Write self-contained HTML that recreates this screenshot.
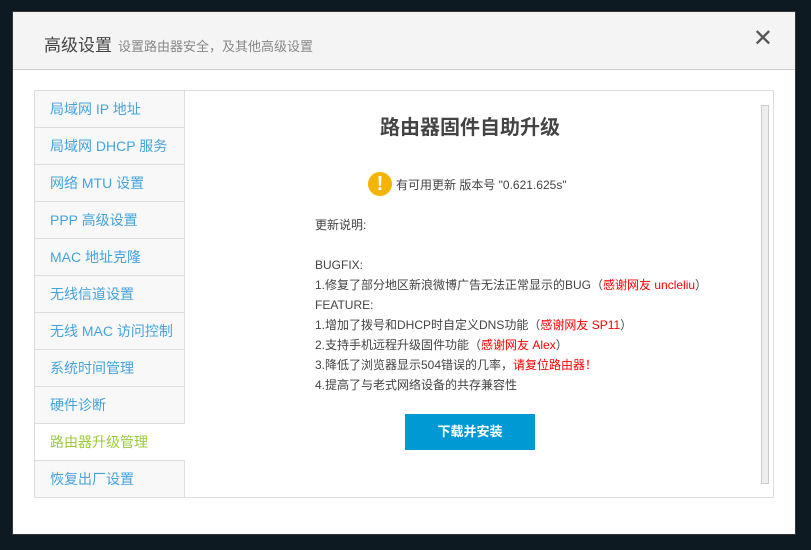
<!DOCTYPE html>
<html><head><meta charset="utf-8"><style>
*{margin:0;padding:0;box-sizing:border-box}
body{width:811px;height:550px;background:#0d1a22;font-family:"Liberation Sans","Noto Sans CJK SC",sans-serif;position:relative;overflow:hidden}
.modal{position:absolute;left:12px;top:11px;width:784px;height:524px;background:#fff;border:1px solid #333}
.hd{height:58px;background:#f4f4f4;border-bottom:1px solid #ccc;position:relative}
.hd .t{position:absolute;left:31px;top:19px;font-size:17px;color:#444}
.hd .s{font-size:13px;color:#888;margin-left:6px}
.hd .x{position:absolute;right:22px;top:12px;font-size:24px;color:#555}
.panel{position:absolute;left:21px;top:78px;width:740px;height:408px;border:1px solid #ddd}
.side{position:absolute;left:0;top:0;width:150px}
.side div{height:37px;border-bottom:1px solid #ddd;border-right:1px solid #ddd;background:#f8f8f8;color:#45a3dc;font-size:14px;line-height:36px;padding-left:15px}
.side div.on{background:#fff;color:#9ccb3a;border-right:none}
.content{position:absolute;left:150px;top:0;right:0;bottom:0}
.sb{position:absolute;left:576px;top:14px;width:8px;height:379px;border:1px solid #ccc;background:#eee}
h1{position:absolute;left:0;width:570px;top:20px;text-align:center;font-size:20px;color:#444;font-weight:bold}
.up{position:absolute;left:183px;top:81px;font-size:12px;color:#444;display:flex;align-items:center}
.ic{width:24px;height:24px;border-radius:50%;background:#f5b400;color:#fff;font-weight:bold;font-size:20px;text-align:center;line-height:24px;margin-right:4px}
.notes{position:absolute;left:130px;top:124px;font-size:12px;color:#444;line-height:20px}
.r{color:#f00}
.btn{position:absolute;left:220px;top:323px;width:130px;height:36px;background:#0099d3;color:#fff;font-weight:bold;font-size:13px;text-align:center;line-height:36px}
</style></head><body>
<div class="modal">
<div class="hd"><div class="t">高级设置<span class="s">设置路由器安全，及其他高级设置</span></div><div class="x">✕</div></div>
<div class="panel">
<div class="side">
<div>局域网 IP 地址</div><div>局域网 DHCP 服务</div><div>网络 MTU 设置</div><div>PPP 高级设置</div><div>MAC 地址克隆</div><div>无线信道设置</div><div>无线 MAC 访问控制</div><div>系统时间管理</div><div>硬件诊断</div><div class="on">路由器升级管理</div><div>恢复出厂设置</div>
</div>
<div class="content">
<h1>路由器固件自助升级</h1>
<div class="up"><div class="ic">!</div>有可用更新 版本号 "0.621.625s"</div>
<div class="notes">更新说明:<br><br>BUGFIX:<br>1.修复了部分地区新浪微博广告无法正常显示的BUG（<span class="r">感谢网友 uncleliu</span>）<br>FEATURE:<br>1.增加了拨号和DHCP时自定义DNS功能（<span class="r">感谢网友 SP11</span>）<br>2.支持手机远程升级固件功能（<span class="r">感谢网友 Alex</span>）<br>3.降低了浏览器显示504错误的几率，<span class="r">请复位路由器！</span><br>4.提高了与老式网络设备的共存兼容性</div>
<div class="btn">下载并安装</div>
<div class="sb"></div>
</div>
</div>
</div>
</body></html>
